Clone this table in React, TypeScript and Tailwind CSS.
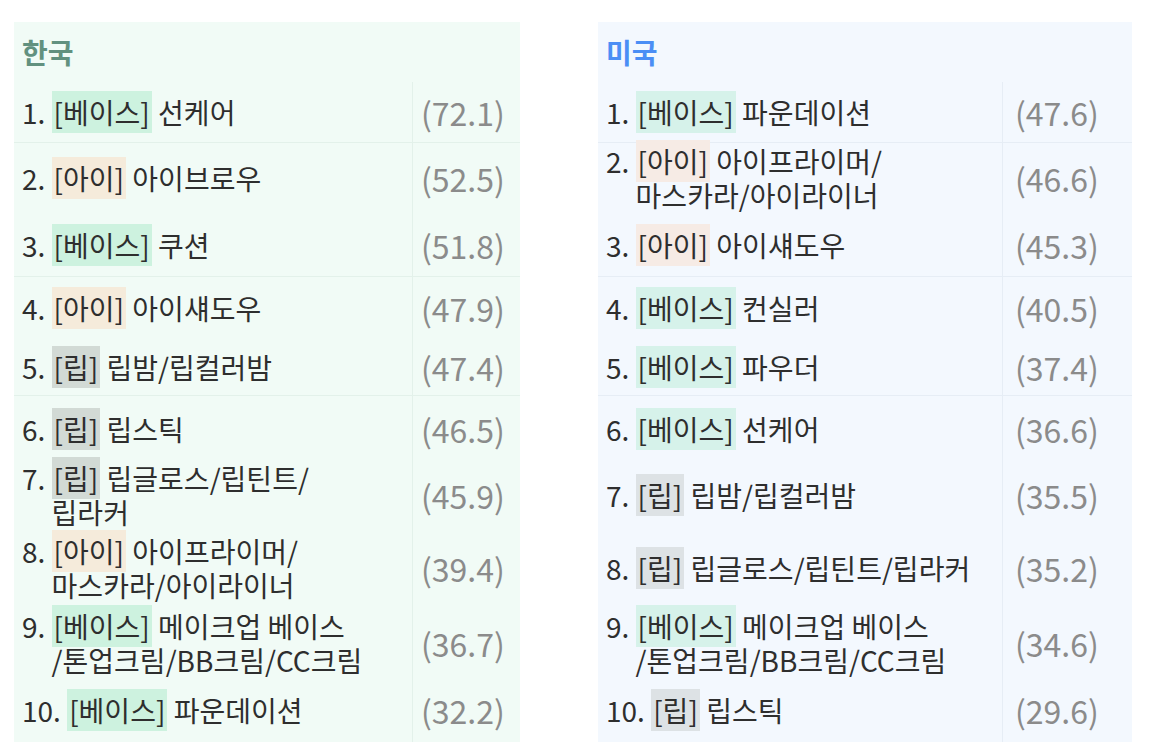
import React from 'react';

type Tag = '베이스' | '아이' | '립';
type Item = { tag: Tag; lines: string[]; score: string };

const ROW_HEIGHTS = ['h-[61px]', 'h-[70px]', 'h-[64px]', 'h-[61px]', 'h-[58px]', 'h-[65px]', 'h-[67px]', 'h-[80px]', 'h-[70px]', 'h-[64px]'];
// faint separators only appear under rows 1, 3 and 5
const ROW_LINES = [true, false, true, false, true, false, false, false, false, false];

const korea: Item[] = [
  { tag: '베이스', lines: ['선케어'], score: '72.1' },
  { tag: '아이', lines: ['아이브로우'], score: '52.5' },
  { tag: '베이스', lines: ['쿠션'], score: '51.8' },
  { tag: '아이', lines: ['아이섀도우'], score: '47.9' },
  { tag: '립', lines: ['립밤/립컬러밤'], score: '47.4' },
  { tag: '립', lines: ['립스틱'], score: '46.5' },
  { tag: '립', lines: ['립글로스/립틴트/', '립라커'], score: '45.9' },
  { tag: '아이', lines: ['아이프라이머/', '마스카라/아이라이너'], score: '39.4' },
  { tag: '베이스', lines: ['메이크업 베이스', '/톤업크림/BB크림/CC크림'], score: '36.7' },
  { tag: '베이스', lines: ['파운데이션'], score: '32.2' },
];

const usa: Item[] = [
  { tag: '베이스', lines: ['파운데이션'], score: '47.6' },
  { tag: '아이', lines: ['아이프라이머/', '마스카라/아이라이너'], score: '46.6' },
  { tag: '아이', lines: ['아이섀도우'], score: '45.3' },
  { tag: '베이스', lines: ['컨실러'], score: '40.5' },
  { tag: '베이스', lines: ['파우더'], score: '37.4' },
  { tag: '베이스', lines: ['선케어'], score: '36.6' },
  { tag: '립', lines: ['립밤/립컬러밤'], score: '35.5' },
  { tag: '립', lines: ['립글로스/립틴트/립라커'], score: '35.2' },
  { tag: '베이스', lines: ['메이크업 베이스', '/톤업크림/BB크림/CC크림'], score: '34.6' },
  { tag: '립', lines: ['립스틱'], score: '29.6' },
];

type Theme = {
  panel: string;
  title: string;
  line: string;
  textCol: string;
  scoreCol: string;
  tags: Record<Tag, string>;
};

const koreaTheme: Theme = {
  panel: 'w-[506px] bg-[#f1fbf6]',
  title: 'text-[#62917f]',
  line: 'border-[#e3f1ea]',
  textCol: 'w-[399px] border-[#e3f1ea]',
  scoreCol: 'pl-[8px]',
  tags: { 베이스: 'bg-[#cdf2df]', 아이: 'bg-[#f5ebdb]', 립: 'bg-[#d2dad5]' },
};

const usaTheme: Theme = {
  panel: 'w-[534px] bg-[#f3f8fe]',
  title: 'text-[#4b8ef5]',
  line: 'border-[#e6edf5]',
  textCol: 'w-[405px] border-[#e6edf5]',
  scoreCol: 'pl-[12px]',
  tags: { 베이스: 'bg-[#d6f2ea]', 아이: 'bg-[#f6ebe5]', 립: 'bg-[#dde2e5]' },
};

const RankPanel: React.FC<{ title: string; items: Item[]; theme: Theme }> = ({ title, items, theme }) => (
  <div className={`flex flex-col ${theme.panel}`}>
    <div className={`h-[60px] px-2 flex items-center text-[28px] font-bold ${theme.title}`}>{title}</div>
    {items.map((item, i) => (
      <div key={i} className={`flex ${ROW_HEIGHTS[i]} ${ROW_LINES[i] ? `border-b ${theme.line}` : ''}`}>
        <div className={`flex items-center pl-2 border-r ${theme.textCol}`}>
          <div className="flex text-[28px] leading-[34px] text-[#2e2e2e]">
            <span className="whitespace-pre">{`${i + 1}. `}</span>
            <div>
              {item.lines.map((l, j) => (
                <div key={j} className="whitespace-nowrap">
                  {j === 0 && (
                    <>
                      <span className={`px-[2px] py-[1px] ${theme.tags[item.tag]}`}>[{item.tag}]</span>{' '}
                    </>
                  )}
                  {l}
                </div>
              ))}
            </div>
          </div>
        </div>
        <div className={`flex-1 flex items-center text-[32px] text-[#8b8b8b] ${theme.scoreCol}`}>({item.score})</div>
      </div>
    ))}
  </div>
);

export default function App() {
  return (
    <div
      className="w-[1152px] h-[755px] bg-white flex items-start gap-[78px] pl-[14px] pt-[22px]"
      style={{ fontFamily: '"Noto Sans CJK KR", "Noto Sans", sans-serif' }}
    >
      <RankPanel title="한국" items={korea} theme={koreaTheme} />
      <RankPanel title="미국" items={usa} theme={usaTheme} />
    </div>
  );
}
